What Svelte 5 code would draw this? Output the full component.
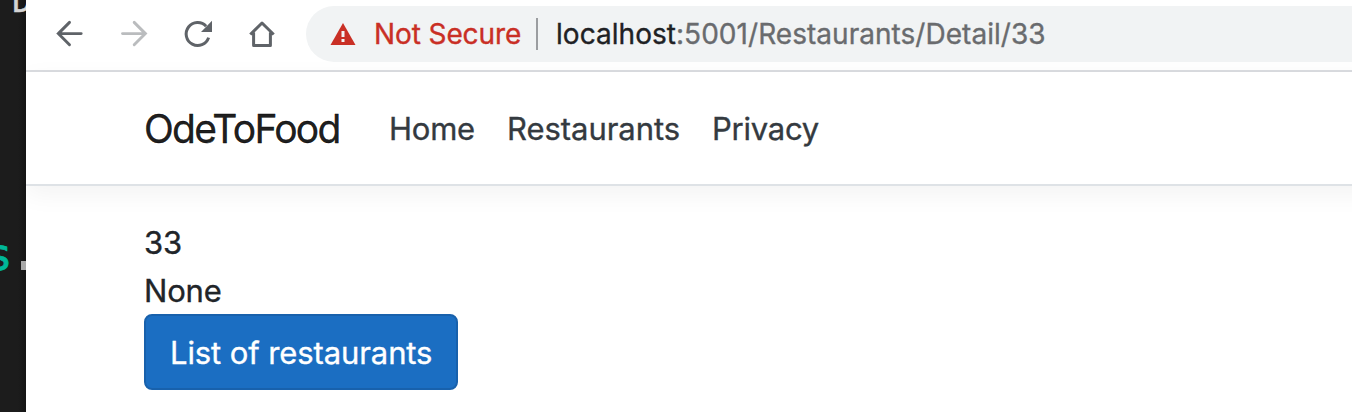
<script>
  const links = [
    { label: 'Home', cls: 'home' },
    { label: 'Restaurants', cls: 'restaurants' },
    { label: 'Privacy', cls: 'privacy' }
  ];
</script>

<div class="desktop">
  <aside class="editor">
    <span class="code top">D</span>
    <span class="code mid">s</span>
    <i class="dot"></i>
  </aside>

  <div class="browser">
    <div class="toolbar">
      <svg class="icon" viewBox="0 0 32 32" fill="none" stroke="#5f6368" stroke-width="2.9" stroke-linecap="round">
        <path d="M27.2 15.6H4.3M15.5 4.4L4.3 15.6L15.5 26.8" />
      </svg>
      <svg class="icon" viewBox="0 0 32 32" fill="none" stroke="#babcbe" stroke-width="2.9" stroke-linecap="round">
        <path d="M4.5 15.6H27.3M16.2 4.4L27.4 15.6L16.2 26.8" />
      </svg>
      <svg class="icon" viewBox="0 0 32 32">
        <path d="M26.6 19.6A11.5 11.5 0 1 1 24.1 8.2" fill="none" stroke="#5f6368" stroke-width="3" />
        <path d="M30 2.8V14H19Z" fill="#5f6368" />
      </svg>
      <svg class="icon" viewBox="0 0 32 32">
        <path d="M4.3 16.5L16 5L27.7 16.5M7.6 14.5V27.4H24.4V14.5" fill="none" stroke="#5f6368" stroke-width="3" stroke-linejoin="round" />
      </svg>
      <div class="address">
        <svg class="warning" viewBox="0 0 26 22">
          <path d="M13 0L25.5 22H.5Z" fill="#c92f25" />
          <path d="M11.5 8h3v6h-3zM11.5 16h3v3h-3z" fill="#f1f3f4" />
        </svg>
        <span class="insecure">Not Secure</span>
        <span class="divider"></span>
        <span class="url"><span class="host">localhost</span>:5001/Restaurants/Detail/33</span>
      </div>
    </div>

    <header class="navbar">
      <span class="brand">OdeToFood</span>
      <nav>
        {#each links as link}
          <span class="link {link.cls}">{link.label}</span>
        {/each}
      </nav>
    </header>

    <main>
      <div class="line">33</div>
      <div class="line">None</div>
      <button>List of restaurants</button>
    </main>
  </div>
</div>

<style>
  .desktop {
    display: flex;
    width: 1352px;
    height: 412px;
    overflow: hidden;
    background: #fff;
    font-family: Inter, sans-serif;
    font-weight: 400;
    -webkit-text-stroke: .35px currentColor;
  }
  .editor {
    position: relative;
    flex: 0 0 26px;
    overflow: hidden;
    background: linear-gradient(90deg, #1c1c1c 70%, #141414);
  }
  .code {
    position: absolute;
    font-family: "DejaVu Sans Mono", monospace;
    white-space: nowrap;
  }
  .top { left: 12px; top: -20px; font-size: 34px; line-height: 40px; color: #d4d4d4; }
  .mid { left: -14px; top: 231px; font-size: 44px; line-height: 48px; color: #00b899; -webkit-text-stroke: .8px #00b899; }
  .dot { position: absolute; left: 21px; top: 261px; width: 7px; height: 9px; background: #a8a8a8; }
  .browser { flex: 1; min-width: 0; display: flex; flex-direction: column; }
  .toolbar {
    display: flex;
    align-items: center;
    box-sizing: border-box;
    height: 72px;
    padding: 0 0 2px 28px;
    border-bottom: 2px solid #dadce0;
    gap: 32px;
  }
  .icon { flex: none; width: 32px; height: 32px; }
  .address {
    display: flex;
    align-items: center;
    flex: 1;
    height: 56px;
    margin-left: -4px;
    padding-left: 24px;
    border-radius: 28px 0 0 28px;
    background: #f1f3f4;
    font-size: 28px;
    white-space: nowrap;
  }
  .warning { width: 26px; height: 22px; }
  .insecure { width: 162px; margin-left: 18px; color: #c92f25; letter-spacing: -.1px; }
  .divider { width: 2px; height: 32px; background: #9b9da0; }
  .url { margin-left: 18px; color: #696b6e; letter-spacing: .04px; }
  .host { color: #202124; }
  .navbar {
    display: flex;
    align-items: center;
    box-sizing: border-box;
    height: 114px;
    margin-right: -40px;
    padding-left: 118px;
    border-bottom: 2px solid #dee2e6;
    box-shadow: 0 8px 24px rgba(0, 0, 0, .05);
  }
  .brand { width: 245px; font-size: 39px; letter-spacing: -1.7px; color: rgba(0, 0, 0, .9); }
  nav { display: flex; font-size: 31px; color: #343a40; letter-spacing: -.25px; }
  .home { width: 118px; }
  .restaurants { width: 205px; letter-spacing: -.05px; }
  main { padding: 32px 0 0 118px; color: #212529; font-size: 31px; letter-spacing: -.2px; }
  .line { height: 48px; line-height: 50px; }
  button {
    display: block;
    box-sizing: border-box;
    width: 314px;
    height: 76px;
    padding: 0 0 0 24px;
    border: 2px solid #1861ac;
    border-radius: 8px;
    background: #1b6ec2;
    color: #fff;
    font: inherit;
    letter-spacing: -.1px;
    text-align: left;
    white-space: nowrap;
  }
</style>
